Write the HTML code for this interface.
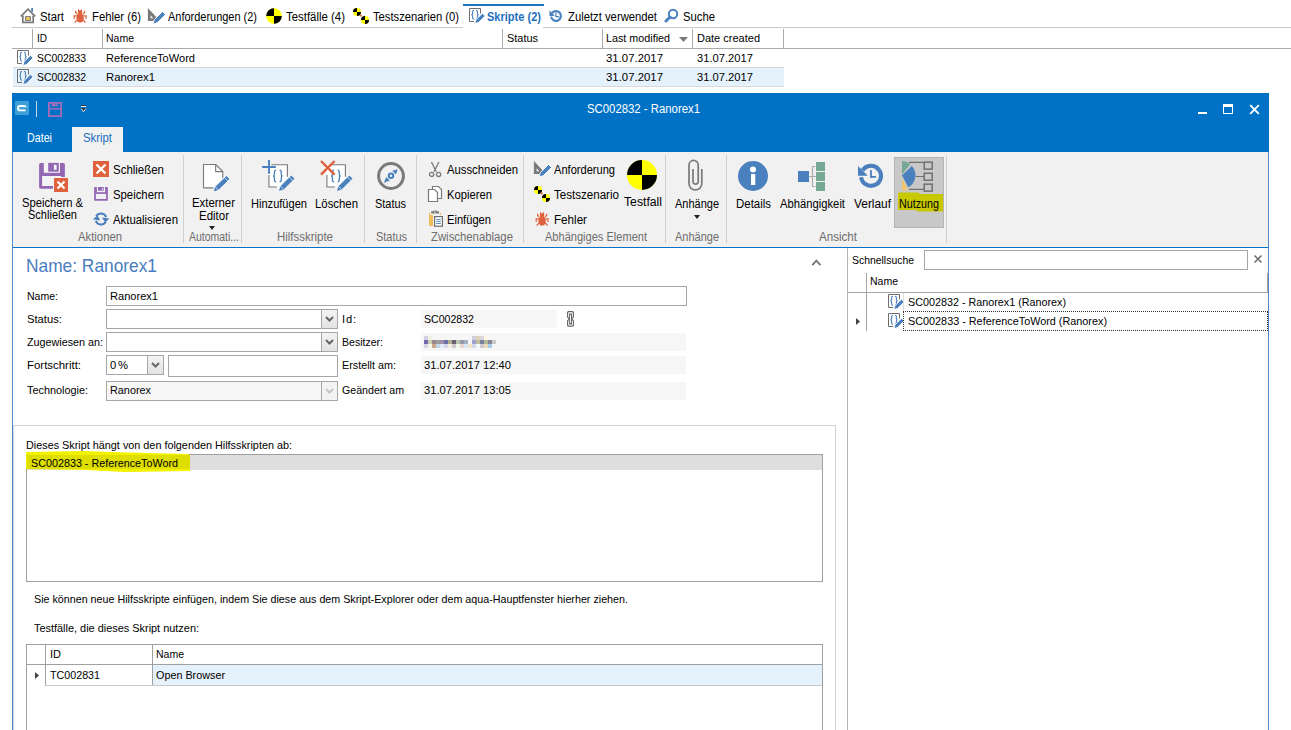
<!DOCTYPE html><html><head><meta charset="utf-8"><style>
html,body{margin:0;padding:0;}
body{width:1291px;height:730px;position:relative;overflow:hidden;background:#fff;font-family:"Liberation Sans", sans-serif;}
.t{position:absolute;white-space:nowrap;line-height:normal;transform-origin:0 0;}
#t0{transform:scaleX(0.9236)}
#t1{transform:scaleX(0.9191)}
#t2{transform:scaleX(0.8917)}
#t3{transform:scaleX(0.9282)}
#t4{transform:scaleX(0.9117)}
#t5{transform:scaleX(0.8979)}
#t6{transform:scaleX(0.9169)}
#t7{transform:scaleX(0.9176)}
#t8{transform:scaleX(0.9091)}
#t9{transform:scaleX(0.9542)}
#t10{transform:scaleX(0.9940)}
#t11{transform:scaleX(0.9780)}
#t12{transform:scaleX(1.0002)}
#t13{transform:scaleX(0.9423)}
#t14{transform:scaleX(1.0062)}
#t15{transform:scaleX(1.0352)}
#t16{transform:scaleX(1.0170)}
#t17{transform:scaleX(0.9423)}
#t18{transform:scaleX(1.0272)}
#t19{transform:scaleX(1.0352)}
#t20{transform:scaleX(1.0170)}
#t21{transform:scaleX(0.8705)}
#t22{transform:scaleX(0.9225)}
#t23{transform:scaleX(0.9234)}
#t24{transform:scaleX(0.9194)}
#t25{transform:scaleX(0.8506)}
#t26{transform:scaleX(0.9312)}
#t27{transform:scaleX(0.8889)}
#t28{transform:scaleX(0.9226)}
#t29{transform:scaleX(0.8988)}
#t30{transform:scaleX(0.8934)}
#t31{transform:scaleX(0.9423)}
#t32{transform:scaleX(0.9104)}
#t33{transform:scaleX(0.8960)}
#t34{transform:scaleX(0.9326)}
#t35{transform:scaleX(0.9210)}
#t36{transform:scaleX(0.9232)}
#t37{transform:scaleX(0.9250)}
#t38{transform:scaleX(0.9339)}
#t39{transform:scaleX(0.9001)}
#t40{transform:scaleX(0.9247)}
#t41{transform:scaleX(0.8889)}
#t42{transform:scaleX(0.9189)}
#t43{transform:scaleX(0.9140)}
#t44{transform:scaleX(0.9063)}
#t45{transform:scaleX(0.9012)}
#t46{transform:scaleX(0.9414)}
#t47{transform:scaleX(0.9467)}
#t48{transform:scaleX(0.9927)}
#t49{transform:scaleX(0.8934)}
#t50{transform:scaleX(0.9310)}
#t51{transform:scaleX(0.9141)}
#t52{transform:scaleX(0.9661)}
#t53{transform:scaleX(0.8731)}
#t54{transform:scaleX(0.9368)}
#t55{transform:scaleX(0.9407)}
#t56{transform:scaleX(1.0049)}
#t57{transform:scaleX(0.9620)}
#t58{transform:scaleX(1.0219)}
#t59{transform:scaleX(0.9709)}
#t60{transform:scaleX(0.9894)}
#t62{transform:scaleX(0.9693)}
#t64{transform:scaleX(0.9419)}
#t65{transform:scaleX(0.9651)}
#t66{transform:scaleX(0.9495)}
#t67{transform:scaleX(0.9456)}
#t68{transform:scaleX(0.9987)}
#t69{transform:scaleX(0.9987)}
#t70{transform:scaleX(0.9677)}
#t71{transform:scaleX(0.9622)}
#t72{transform:scaleX(0.9580)}
#t73{transform:scaleX(0.9754)}
#t74{transform:scaleX(0.9832)}
#t75{transform:scaleX(0.9382)}
#t76{transform:scaleX(0.9569)}
#t77{transform:scaleX(0.9648)}
#t78{transform:scaleX(0.9317)}
#t79{transform:scaleX(0.9382)}
#t80{transform:scaleX(0.9624)}
#t81{transform:scaleX(0.9678)}
#t61{letter-spacing:1.828px}
#t63{letter-spacing:0.773px}</style></head><body>
<div style="position:absolute;left:12px;top:27px;width:451px;height:1px;background:#c9c9c9;"></div>
<div style="position:absolute;left:543px;top:27px;width:748px;height:1px;background:#c9c9c9;"></div>
<div style="position:absolute;left:463px;top:4px;width:81px;height:2px;background:#1e73be;"></div>
<svg style="position:absolute;left:19px;top:7px" width="18" height="17" viewBox="0 0 18 17">
<path d="M1.8 9.3L9 2.2l7.2 7.1" fill="none" stroke="#7a7a7a" stroke-width="1.7"/>
<path d="M3.8 8.5v6.9h10.4V8.5" fill="none" stroke="#7a7a7a" stroke-width="1.7"/>
<rect x="6.6" y="9.6" width="4.8" height="3.8" fill="#f4c45e" stroke="#7a7a7a" stroke-width="1"/>
<rect x="12.2" y="1" width="1.8" height="3.8" fill="#4a80bd"/>
</svg>
<span id="t0" class="t" style="left:40px;top:9.87px;font-size:12.3px;color:#000;font-weight:400;">Start</span>
<svg style="position:absolute;left:70px;top:6px" width="20" height="20" viewBox="0 0 20 20"><g fill="#e0613d">
<path d="M8.1 2.6L9.2 4.2H10.9L12 2.6 12.2 7H7.9z"/>
<ellipse cx="10.1" cy="11.8" rx="3.7" ry="5"/>
</g><path d="M7.2 7.8L5.6 6.6V4.8M13 7.8l1.6-1.2V4.8M6.8 9.8H4.2V13M13.4 9.8H16V13M7 14l-2.4 2.6M13.2 14l2.4 2.6" fill="none" stroke="#e0613d" stroke-width="1.2"/></svg>
<span id="t1" class="t" style="left:92px;top:9.87px;font-size:12.3px;color:#000;font-weight:400;">Fehler (6)</span>
<svg style="position:absolute;left:146px;top:6px" width="20" height="20" viewBox="0 0 20 20">
<path d="M1.9 1.9L10.5 11.2 8.3 15H1.9z" fill="#7a7a7a"/><path d="M4.6 9.2V12.3H7.3z" fill="#fff"/>
<path d="M7.00 18.00 L11.16 16.81 L19.48 8.48 L16.52 5.52 L8.19 13.84z" fill="#4a80bd" stroke="#fff" stroke-width="0.9"/>
</svg>
<span id="t2" class="t" style="left:168px;top:9.87px;font-size:12.3px;color:#000;font-weight:400;">Anforderungen (2)</span>
<svg style="position:absolute;left:265px;top:7px" width="18" height="18" viewBox="0 0 18 18"><circle cx="9" cy="9" r="7.8" fill="#ffff00"/><path d="M9 9V1.2000000000000002A7.8 7.8 0 0 0 1.2000000000000002 9Z" fill="#000"/><path d="M9 9V16.8A7.8 7.8 0 0 0 16.8 9Z" fill="#000"/></svg>
<span id="t3" class="t" style="left:286px;top:9.87px;font-size:12.3px;color:#000;font-weight:400;">Testfälle (4)</span>
<svg style="position:absolute;left:352px;top:7px" width="18" height="18" viewBox="0 0 18 18"><circle cx="5" cy="5" r="4" fill="#ffff00"/><path d="M5 5V1A4 4 0 0 0 1 5Z" fill="#000"/><path d="M5 5V9A4 4 0 0 0 9 5Z" fill="#000"/><circle cx="13" cy="13" r="4" fill="#ffff00"/><path d="M13 13V9A4 4 0 0 0 9 13Z" fill="#000"/><path d="M13 13V17A4 4 0 0 0 17 13Z" fill="#000"/><path d="M7.5 8.5l2.5-1-1 2.5z" fill="#e05030"/></svg>
<span id="t4" class="t" style="left:373px;top:9.87px;font-size:12.3px;color:#000;font-weight:400;">Testszenarien (0)</span>
<svg style="position:absolute;left:469px;top:8px" width="16" height="16" viewBox="0 0 16 16">
<path d="M5 13.5H0.5V0.5H11.5V5.5" fill="none" stroke="#6e6e6e" stroke-width="1"/>
<path d="M5 2.2c-1 0-1.4.5-1.4 1.5v1.8c0 .8-.5 1.2-1.3 1.2.8 0 1.3.4 1.3 1.2v1.8c0 1 .4 1.5 1.4 1.5M7 2.2c1 0 1.4.5 1.4 1.5v1.8c0 .8.5 1.2 1.3 1.2-.8 0-1.3.4-1.3 1.2v1.8c0 1-.4 1.5-1.4 1.5" fill="none" stroke="#4a80bd" stroke-width="1.1"/>
<path d="M5.80 15.60 L9.56 14.53 L16.14 7.94 L13.46 5.26 L6.87 11.84z" fill="#4a80bd" stroke="#fff" stroke-width="0.9"/>
</svg>
<span id="t5" class="t" style="left:487px;top:9.87px;font-size:12.3px;color:#1e6fc0;font-weight:700;">Skripte (2)</span>
<svg style="position:absolute;left:548px;top:8px" width="16" height="16" viewBox="0 0 16 16">
<path d="M3.15 8.6A4.9 4.9 0 1 0 3.9 5.3" fill="none" stroke="#4a80bd" stroke-width="2.2"/>
<path d="M1.5 2.3V7.9H6.8z" fill="#4a80bd"/>
<path d="M7.9 4.6V8.6H11" fill="none" stroke="#4a80bd" stroke-width="1.2"/>
</svg>
<span id="t6" class="t" style="left:568px;top:9.87px;font-size:12.3px;color:#000;font-weight:400;">Zuletzt verwendet</span>
<svg style="position:absolute;left:664px;top:8px" width="15" height="15" viewBox="0 0 15 15">
<circle cx="9" cy="6" r="4.2" fill="none" stroke="#4a80bd" stroke-width="2"/>
<path d="M6 9L2 13" stroke="#4a80bd" stroke-width="3" stroke-linecap="round"/>
</svg>
<span id="t7" class="t" style="left:683px;top:9.87px;font-size:12.3px;color:#000;font-weight:400;">Suche</span>
<div style="position:absolute;left:12px;top:48px;width:1279px;height:1px;background:#a9a9a9;"></div>
<div style="position:absolute;left:32px;top:29px;width:1px;height:19px;background:#a9a9a9;"></div>
<div style="position:absolute;left:102px;top:29px;width:1px;height:19px;background:#a9a9a9;"></div>
<div style="position:absolute;left:502px;top:29px;width:1px;height:19px;background:#a9a9a9;"></div>
<div style="position:absolute;left:602px;top:29px;width:1px;height:19px;background:#a9a9a9;"></div>
<div style="position:absolute;left:692px;top:29px;width:1px;height:19px;background:#a9a9a9;"></div>
<div style="position:absolute;left:783px;top:29px;width:1px;height:19px;background:#a9a9a9;"></div>
<div style="position:absolute;left:13px;top:67px;width:771px;height:1px;background:#d9d9d9;"></div>
<div style="position:absolute;left:13px;top:68px;width:771px;height:18px;background:#e5f1fb;"></div>
<div style="position:absolute;left:13px;top:86px;width:771px;height:1px;background:#d9d9d9;"></div>
<span id="t8" class="t" style="left:37px;top:32.05px;font-size:11px;color:#000;font-weight:400;">ID</span>
<span id="t9" class="t" style="left:106px;top:32.05px;font-size:11px;color:#000;font-weight:400;">Name</span>
<span id="t10" class="t" style="left:507px;top:32.05px;font-size:11px;color:#000;font-weight:400;">Status</span>
<span id="t11" class="t" style="left:606px;top:32.05px;font-size:11px;color:#000;font-weight:400;">Last modified</span>
<span id="t12" class="t" style="left:697px;top:32.05px;font-size:11px;color:#000;font-weight:400;">Date created</span>
<svg style="position:absolute;left:679px;top:37px" width="9" height="5" viewBox="0 0 9 5"><path d="M0 0h9L4.5 5z" fill="#7a7a7a"/></svg>
<svg style="position:absolute;left:17px;top:50px" width="16" height="16" viewBox="0 0 16 16">
<path d="M5 13.5H0.5V0.5H11.5V5.5" fill="none" stroke="#6e6e6e" stroke-width="1"/>
<path d="M5 2.2c-1 0-1.4.5-1.4 1.5v1.8c0 .8-.5 1.2-1.3 1.2.8 0 1.3.4 1.3 1.2v1.8c0 1 .4 1.5 1.4 1.5M7 2.2c1 0 1.4.5 1.4 1.5v1.8c0 .8.5 1.2 1.3 1.2-.8 0-1.3.4-1.3 1.2v1.8c0 1-.4 1.5-1.4 1.5" fill="none" stroke="#4a80bd" stroke-width="1.1"/>
<path d="M5.80 15.60 L9.56 14.53 L16.14 7.94 L13.46 5.26 L6.87 11.84z" fill="#4a80bd" stroke="#fff" stroke-width="0.9"/>
</svg>
<span id="t13" class="t" style="left:37px;top:52.05px;font-size:11px;color:#000;font-weight:400;">SC002833</span>
<span id="t14" class="t" style="left:106px;top:52.05px;font-size:11px;color:#000;font-weight:400;">ReferenceToWord</span>
<span id="t15" class="t" style="left:606px;top:52.05px;font-size:11px;color:#000;font-weight:400;">31.07.2017</span>
<span id="t16" class="t" style="left:697px;top:52.05px;font-size:11px;color:#000;font-weight:400;">31.07.2017</span>
<svg style="position:absolute;left:17px;top:69px" width="16" height="16" viewBox="0 0 16 16">
<path d="M5 13.5H0.5V0.5H11.5V5.5" fill="none" stroke="#6e6e6e" stroke-width="1"/>
<path d="M5 2.2c-1 0-1.4.5-1.4 1.5v1.8c0 .8-.5 1.2-1.3 1.2.8 0 1.3.4 1.3 1.2v1.8c0 1 .4 1.5 1.4 1.5M7 2.2c1 0 1.4.5 1.4 1.5v1.8c0 .8.5 1.2 1.3 1.2-.8 0-1.3.4-1.3 1.2v1.8c0 1-.4 1.5-1.4 1.5" fill="none" stroke="#4a80bd" stroke-width="1.1"/>
<path d="M5.80 15.60 L9.56 14.53 L16.14 7.94 L13.46 5.26 L6.87 11.84z" fill="#4a80bd" stroke="#fff" stroke-width="0.9"/>
</svg>
<span id="t17" class="t" style="left:37px;top:71.05px;font-size:11px;color:#000;font-weight:400;">SC002832</span>
<span id="t18" class="t" style="left:106px;top:71.05px;font-size:11px;color:#000;font-weight:400;">Ranorex1</span>
<span id="t19" class="t" style="left:606px;top:71.05px;font-size:11px;color:#000;font-weight:400;">31.07.2017</span>
<span id="t20" class="t" style="left:697px;top:71.05px;font-size:11px;color:#000;font-weight:400;">31.07.2017</span>
<div style="position:absolute;left:12px;top:93px;width:1257px;height:59px;background:#0072c6;"></div>
<div style="position:absolute;left:12px;top:152px;width:1px;height:578px;background:#4e88c6;"></div>
<div style="position:absolute;left:1268px;top:152px;width:1px;height:578px;background:#4e88c6;"></div>
<div style="position:absolute;left:13px;top:152px;width:1255px;height:95px;background:#f1f1f1;"></div>
<div style="position:absolute;left:13px;top:247px;width:1255px;height:1px;background:#0872c8;"></div>
<div style="position:absolute;left:72px;top:127px;width:51px;height:25px;background:#f1f1f1;"></div>
<span id="t21" class="t" style="left:27px;top:130.87px;font-size:12.3px;color:#fff;font-weight:400;">Datei</span>
<span id="t22" class="t" style="left:83px;top:130.87px;font-size:12.3px;color:#1a6dbd;font-weight:400;">Skript</span>
<span id="t23" class="t" style="left:587px;top:101.87px;font-size:12.3px;color:#fff;font-weight:400;">SC002832 - Ranorex1</span>
<svg style="position:absolute;left:15px;top:101px" width="14" height="14" viewBox="0 0 14 14"><rect width="14" height="14" fill="#3fa0d8"/><path d="M10.5 6.2C10.5 5 9.8 5 8.5 5H5.2a2.2 2.2 0 0 0 0 4.4H10.5" fill="none" stroke="#fff" stroke-width="1.9"/></svg>
<div style="position:absolute;left:36px;top:101px;width:1px;height:16px;background:#c9d6e6;"></div>
<svg style="position:absolute;left:48px;top:102px" width="15" height="15" viewBox="0 0 15 15"><path d="M0.9 0.9h12.2v13.2H0.9z" fill="none" stroke="#a46cb8" stroke-width="1.8"/><rect x="3.8" y="0" width="6" height="4.4" fill="#a46cb8"/><rect x="7" y="1" width="1.6" height="2.4" fill="#3a7fc8"/><path d="M0.9 6.8h12.2" stroke="#a46cb8" stroke-width="1.4"/></svg>
<div style="position:absolute;left:81px;top:105px;width:5px;height:1px;background:#3a3a3a;"></div>
<div style="position:absolute;left:81px;top:106px;width:5px;height:1px;background:#f4f4f4;"></div>
<svg style="position:absolute;left:80px;top:107px" width="8" height="6" viewBox="0 0 8 6"><path d="M1 1H6L3.5 4.6z" fill="#3a3a3a"/><path d="M1.2 1.6L3.5 4.8 5.8 1.6" fill="none" stroke="#fff" stroke-width="0.8"/></svg>
<div style="position:absolute;left:1198px;top:112px;width:9px;height:2px;background:#fff;"></div>
<div style="position:absolute;left:1223px;top:104px;width:10px;height:10px;box-sizing:border-box;border:1px solid #fff;background:transparent;"></div>
<div style="position:absolute;left:1223px;top:104px;width:10px;height:3px;background:#fff;"></div>
<svg style="position:absolute;left:1249px;top:104px" width="11" height="11" viewBox="0 0 11 11"><path d="M1.2 1.2l8.6 8.6M9.8 1.2l-8.6 8.6" stroke="#fff" stroke-width="1.9"/></svg>
<div style="position:absolute;left:183px;top:155px;width:1px;height:88px;background:#d0d0d0;"></div>
<div style="position:absolute;left:241px;top:155px;width:1px;height:88px;background:#d0d0d0;"></div>
<div style="position:absolute;left:364px;top:155px;width:1px;height:88px;background:#d0d0d0;"></div>
<div style="position:absolute;left:416px;top:155px;width:1px;height:88px;background:#d0d0d0;"></div>
<div style="position:absolute;left:523px;top:155px;width:1px;height:88px;background:#d0d0d0;"></div>
<div style="position:absolute;left:665px;top:155px;width:1px;height:88px;background:#d0d0d0;"></div>
<div style="position:absolute;left:726px;top:155px;width:1px;height:88px;background:#d0d0d0;"></div>
<div style="position:absolute;left:946px;top:155px;width:1px;height:88px;background:#d0d0d0;"></div>
<span id="t24" class="t" style="left:78px;top:229.87px;font-size:12.3px;color:#6d6d6d;font-weight:400;">Aktionen</span>
<span id="t25" class="t" style="left:189px;top:229.87px;font-size:12.3px;color:#6d6d6d;font-weight:400;">Automati...</span>
<span id="t26" class="t" style="left:277px;top:229.87px;font-size:12.3px;color:#6d6d6d;font-weight:400;">Hilfsskripte</span>
<span id="t27" class="t" style="left:376px;top:229.87px;font-size:12.3px;color:#6d6d6d;font-weight:400;">Status</span>
<span id="t28" class="t" style="left:431px;top:229.87px;font-size:12.3px;color:#6d6d6d;font-weight:400;">Zwischenablage</span>
<span id="t29" class="t" style="left:545px;top:229.87px;font-size:12.3px;color:#6d6d6d;font-weight:400;">Abhängiges Element</span>
<span id="t30" class="t" style="left:675px;top:229.87px;font-size:12.3px;color:#6d6d6d;font-weight:400;">Anhänge</span>
<span id="t31" class="t" style="left:819px;top:229.87px;font-size:12.3px;color:#6d6d6d;font-weight:400;">Ansicht</span>
<svg style="position:absolute;left:38px;top:162px" width="32" height="32" viewBox="0 0 32 32">
<rect x="1.1" y="0.9" width="25.8" height="25.8" rx="1.6" fill="#9467b3"/>
<rect x="5.8" y="0.9" width="16.2" height="9.9" fill="#f4f4f4"/>
<rect x="10.2" y="0.9" width="10.6" height="8.8" fill="#9467b3"/>
<rect x="15.9" y="2.8" width="2.7" height="5" fill="#f4f4f4"/>
<rect x="4.1" y="14" width="19" height="10" fill="#f4f4f4"/>
<rect x="15" y="15" width="16" height="15" fill="#f1f1f1"/>
<rect x="16" y="16" width="14" height="14" fill="#e0613d"/>
<path d="M19.5 19.5l7 7M26.5 19.5l-7 7" stroke="#fff" stroke-width="2.2"/>
</svg>
<span id="t32" class="t" style="left:22px;top:195.87px;font-size:12.3px;color:#000;font-weight:400;">Speichern &amp;</span>
<span id="t33" class="t" style="left:28px;top:207.87px;font-size:12.3px;color:#000;font-weight:400;">Schließen</span>
<svg style="position:absolute;left:93px;top:161px" width="17" height="17" viewBox="0 0 17 17"><rect x="0" y="0" width="16" height="16" fill="#e0613d"/><path d="M3.5 3.5l9 9M12.5 3.5l-9 9" stroke="#fff" stroke-width="2.4"/></svg>
<span id="t34" class="t" style="left:113px;top:162.87px;font-size:12.3px;color:#000;font-weight:400;">Schließen</span>
<svg style="position:absolute;left:91px;top:184px" width="20" height="20" viewBox="0 0 20 20"><rect x="3.15" y="3" width="13.7" height="13.7" rx="0.6" fill="#9467b3"/><rect x="5.9" y="3" width="8.2" height="5.2" fill="#f1f1f1"/><rect x="7" y="3" width="5.8" height="3.7" fill="#9467b3"/><rect x="11" y="4.1" width="1" height="1.8" fill="#f1f1f1"/><rect x="4.9" y="9.9" width="10.2" height="5.1" fill="#f1f1f1"/></svg>
<span id="t35" class="t" style="left:113px;top:187.87px;font-size:12.3px;color:#000;font-weight:400;">Speichern</span>
<svg style="position:absolute;left:92px;top:211px" width="18" height="16" viewBox="0 0 18 16">
<path d="M4.24 5.25A5.5 5.5 0 0 1 14.17 6.12" fill="none" stroke="#4a80bd" stroke-width="2"/>
<path d="M13.76 10.75A5.5 5.5 0 0 1 3.83 9.88" fill="none" stroke="#4a80bd" stroke-width="2"/>
<path d="M0.8 8.2L5.6 4.6 8.2 9.4z" fill="#4a80bd"/><path d="M9.8 6.6L17.2 7.6 13.4 11.6z" fill="#4a80bd"/>
</svg>
<span id="t36" class="t" style="left:113px;top:212.87px;font-size:12.3px;color:#000;font-weight:400;">Aktualisieren</span>
<svg style="position:absolute;left:198px;top:158px" width="34" height="38" viewBox="0 0 34 38">
<path d="M5 6H17.7L25 13.3V30H5z" fill="#fff"/>
<path d="M5.5 29.9V6.5H17.7L24.8 13.6V20M5.5 29.9H15.5" fill="none" stroke="#777" stroke-width="1.1"/>
<path d="M17.7 6.5V13.6H24.8" fill="none" stroke="#777" stroke-width="1.1"/>
<path d="M15.00 34.00 L20.17 32.62 L32.01 21.17 L28.39 17.43 L16.56 28.88z" fill="#4a80bd" stroke="#fff" stroke-width="0.9"/><path d="M20.60 32.20L16.99 28.46" stroke="#fff" stroke-width="0.7"/><path d="M29.95 23.16L26.34 19.42" stroke="#fff" stroke-width="0.7"/>
</svg>
<span id="t37" class="t" style="left:192px;top:195.87px;font-size:12.3px;color:#000;font-weight:400;">Externer</span>
<span id="t38" class="t" style="left:199px;top:208.87px;font-size:12.3px;color:#000;font-weight:400;">Editor</span>
<svg style="position:absolute;left:209px;top:226px" width="7" height="5" viewBox="0 0 7 5"><path d="M0 0h6L3 4z" fill="#222"/></svg>
<svg style="position:absolute;left:258px;top:156px" width="40" height="40" viewBox="0 0 40 40">
<rect x="10.4" y="8.2" width="19.5" height="23.3" fill="#fff"/>
<path d="M13.2 8.7H29.4V20.8M10.9 18.9V31H18.9" fill="none" stroke="#777" stroke-width="1.1"/>
<path d="M18.1 14.2c-1.6 0-1.7.9-1.7 2.3v1.9c0 1-.5 1.6-1.3 1.6.8 0 1.3.6 1.3 1.6v1.9c0 1.4.1 2.3 1.7 2.3M21.6 14.2c1.6 0 1.7.9 1.7 2.3v1.9c0 1 .5 1.6 1.3 1.6-.8 0-1.3.6-1.3 1.6v1.9c0 1.4-.1 2.3-1.7 2.3" fill="none" stroke="#4a80bd" stroke-width="1.3"/>
<path d="M20.30 35.60 L25.45 34.15 L37.03 22.64 L33.37 18.96 L21.79 30.46z" fill="#4a80bd" stroke="#fff" stroke-width="0.9"/><path d="M25.88 33.72L22.21 30.03" stroke="#fff" stroke-width="0.7"/><path d="M35.00 24.66L31.34 20.97" stroke="#fff" stroke-width="0.7"/>
<path d="M4.1 11H17.8M11 4.1V17.8" stroke="#4a80bd" stroke-width="1.9"/>
</svg>
<span id="t39" class="t" style="left:251px;top:196.87px;font-size:12.3px;color:#000;font-weight:400;">Hinzufügen</span>
<svg style="position:absolute;left:316px;top:156px" width="40" height="40" viewBox="0 0 40 40">
<rect x="10.4" y="8.2" width="19.5" height="23.3" fill="#fff"/>
<path d="M13.2 8.7H29.4V20.8M10.9 18.9V31H18.9" fill="none" stroke="#777" stroke-width="1.1"/>
<path d="M18.1 14.2c-1.6 0-1.7.9-1.7 2.3v1.9c0 1-.5 1.6-1.3 1.6.8 0 1.3.6 1.3 1.6v1.9c0 1.4.1 2.3 1.7 2.3M21.6 14.2c1.6 0 1.7.9 1.7 2.3v1.9c0 1 .5 1.6 1.3 1.6-.8 0-1.3.6-1.3 1.6v1.9c0 1.4-.1 2.3-1.7 2.3" fill="none" stroke="#4a80bd" stroke-width="1.3"/>
<path d="M20.30 35.60 L25.45 34.15 L37.03 22.64 L33.37 18.96 L21.79 30.46z" fill="#4a80bd" stroke="#fff" stroke-width="0.9"/><path d="M25.88 33.72L22.21 30.03" stroke="#fff" stroke-width="0.7"/><path d="M35.00 24.66L31.34 20.97" stroke="#fff" stroke-width="0.7"/>
<path d="M5 5l13.6 13.6M18.6 5L5 18.6" stroke="#e0613d" stroke-width="2.4"/>
</svg>
<span id="t40" class="t" style="left:315px;top:196.87px;font-size:12.3px;color:#000;font-weight:400;">Löschen</span>
<svg style="position:absolute;left:376px;top:161px" width="30" height="30" viewBox="0 0 30 30">
<circle cx="15" cy="15" r="12.4" fill="none" stroke="#7a7a7a" stroke-width="3"/>
<path d="M21.75 8.2L19.9 13.6 16.3 9.8z" fill="#4a80bd"/><path d="M8 21.8L10.1 16 13.9 19.6z" fill="#4a80bd"/>
<circle cx="15" cy="14.7" r="2.2" fill="none" stroke="#4a80bd" stroke-width="2"/>
</svg>
<span id="t41" class="t" style="left:375px;top:196.87px;font-size:12.3px;color:#000;font-weight:400;">Status</span>
<svg style="position:absolute;left:426px;top:158px" width="18" height="20" viewBox="0 0 18 20">
<path d="M5.4 4L10.3 13.8M12.9 4L8 13.8" stroke="#7a7a7a" stroke-width="1.3"/>
<circle cx="5.6" cy="16.4" r="2.1" fill="none" stroke="#7a7a7a" stroke-width="1.3"/>
<circle cx="12.6" cy="16.4" r="2.1" fill="none" stroke="#7a7a7a" stroke-width="1.3"/>
</svg>
<span id="t42" class="t" style="left:447px;top:162.87px;font-size:12.3px;color:#000;font-weight:400;">Ausschneiden</span>
<svg style="position:absolute;left:427px;top:185px" width="17" height="18" viewBox="0 0 17 18">
<path d="M5.5 1.5h6l3 3V13.5H5.5z" fill="#fff" stroke="#7a7a7a" stroke-width="1.2"/>
<path d="M1.5 4.5h6l3 3V16.5H1.5z" fill="#fff" stroke="#7a7a7a" stroke-width="1.2"/>
</svg>
<span id="t43" class="t" style="left:447px;top:187.87px;font-size:12.3px;color:#000;font-weight:400;">Kopieren</span>
<svg style="position:absolute;left:426px;top:208px" width="20" height="22" viewBox="0 0 20 22">
<path d="M3 4.8H4.2V7H7V18H3z" fill="#efbc5a"/>
<rect x="13.9" y="5" width="1.2" height="1.9" fill="#efbc5a"/>
<path d="M5.2 3.2H7.6V2.6H10.6V3.2H13V5.6H5.2z" fill="#777"/><rect x="8.2" y="3.6" width="1.8" height="0.9" fill="#eee"/>
<rect x="8.6" y="8.6" width="7.8" height="9.6" fill="#fff" stroke="#6e6e6e" stroke-width="1.2"/>
<path d="M10.2 11.4h4.6M10.2 13.4h4.6M10.2 15.5h4.6" stroke="#4a80bd" stroke-width="0.9"/>
</svg>
<span id="t44" class="t" style="left:447px;top:212.87px;font-size:12.3px;color:#000;font-weight:400;">Einfügen</span>
<svg style="position:absolute;left:532px;top:159px" width="20" height="20" viewBox="0 0 20 20">
<path d="M1.9 1.9L10.5 11.2 8.3 15H1.9z" fill="#7a7a7a"/><path d="M4.6 9.2V12.3H7.3z" fill="#fff"/>
<path d="M7.00 18.00 L11.16 16.81 L19.48 8.48 L16.52 5.52 L8.19 13.84z" fill="#4a80bd" stroke="#fff" stroke-width="0.9"/>
</svg>
<span id="t45" class="t" style="left:554px;top:162.87px;font-size:12.3px;color:#000;font-weight:400;">Anforderung</span>
<svg style="position:absolute;left:533px;top:185px" width="18" height="18" viewBox="0 0 18 18"><circle cx="5" cy="5" r="4" fill="#ffff00"/><path d="M5 5V1A4 4 0 0 0 1 5Z" fill="#000"/><path d="M5 5V9A4 4 0 0 0 9 5Z" fill="#000"/><circle cx="13" cy="13" r="4" fill="#ffff00"/><path d="M13 13V9A4 4 0 0 0 9 13Z" fill="#000"/><path d="M13 13V17A4 4 0 0 0 17 13Z" fill="#000"/><path d="M7.5 8.5l2.5-1-1 2.5z" fill="#e05030"/></svg>
<span id="t46" class="t" style="left:554px;top:187.87px;font-size:12.3px;color:#000;font-weight:400;">Testszenario</span>
<svg style="position:absolute;left:532px;top:209px" width="20" height="20" viewBox="0 0 20 20"><g fill="#e0613d">
<path d="M8.1 2.6L9.2 4.2H10.9L12 2.6 12.2 7H7.9z"/>
<ellipse cx="10.1" cy="11.8" rx="3.7" ry="5"/>
</g><path d="M7.2 7.8L5.6 6.6V4.8M13 7.8l1.6-1.2V4.8M6.8 9.8H4.2V13M13.4 9.8H16V13M7 14l-2.4 2.6M13.2 14l2.4 2.6" fill="none" stroke="#e0613d" stroke-width="1.2"/></svg>
<span id="t47" class="t" style="left:554px;top:212.87px;font-size:12.3px;color:#000;font-weight:400;">Fehler</span>
<svg style="position:absolute;left:626px;top:159px" width="32" height="32" viewBox="0 0 32 32"><circle cx="16" cy="16" r="15" fill="#ffff00"/><path d="M16 16V1A15 15 0 0 0 1 16Z" fill="#000"/><path d="M16 16V31A15 15 0 0 0 31 16Z" fill="#000"/></svg>
<span id="t48" class="t" style="left:624px;top:194.87px;font-size:12.3px;color:#000;font-weight:400;">Testfall</span>
<svg style="position:absolute;left:683px;top:158px" width="25" height="36" viewBox="0 0 25 36"><path d="M10 11.1V23.5A2.6 2.6 0 0 0 15.2 23.5V7A4.6 4.6 0 0 0 6 7V25.5A6.4 6.4 0 0 0 18.8 25.5V11.1" fill="none" stroke="#7c7c7c" stroke-width="1.75"/></svg>
<span id="t49" class="t" style="left:675px;top:196.87px;font-size:12.3px;color:#000;font-weight:400;">Anhänge</span>
<svg style="position:absolute;left:694px;top:215px" width="7" height="5" viewBox="0 0 7 5"><path d="M0 0h6L3 4z" fill="#222"/></svg>
<svg style="position:absolute;left:737px;top:160px" width="32" height="32" viewBox="0 0 32 32">
<circle cx="16" cy="16" r="15" fill="#4a80bd"/>
<circle cx="16" cy="9.5" r="3" fill="#fff"/>
<rect x="14" y="14" width="4.3" height="11" fill="#fff"/>
</svg>
<span id="t50" class="t" style="left:736px;top:196.87px;font-size:12.3px;color:#000;font-weight:400;">Details</span>
<svg style="position:absolute;left:797px;top:161px" width="30" height="32" viewBox="0 0 30 32">
<rect x="1" y="10" width="11" height="11" fill="#4a80bd"/>
<path d="M12 15.5h7M15.5 5.5v20M15.5 5.5h3M15.5 25.5h3" fill="none" stroke="#aaa" stroke-width="1.2"/>
<rect x="19" y="1" width="9" height="9" fill="#76a895"/>
<rect x="19" y="11" width="9" height="9" fill="#76a895"/>
<rect x="19" y="21" width="9" height="9" fill="#76a895"/>
</svg>
<span id="t51" class="t" style="left:780px;top:196.87px;font-size:12.3px;color:#000;font-weight:400;">Abhängigkeit</span>
<svg style="position:absolute;left:855px;top:160px" width="32" height="32" viewBox="0 0 32 32">
<path d="M6.1 17.2A10 10 0 1 0 7.6 10.4" fill="none" stroke="#4a80bd" stroke-width="4.1"/>
<path d="M3 6L3 15.8 12.8 15.8z" fill="#4a80bd"/>
<rect x="15.1" y="10.1" width="1.8" height="7.7" fill="#4a80bd"/><rect x="15.1" y="16" width="5.8" height="1.8" fill="#4a80bd"/>
</svg>
<span id="t52" class="t" style="left:854px;top:196.87px;font-size:12.3px;color:#000;font-weight:400;">Verlauf</span>
<div style="position:absolute;left:894px;top:157px;width:50px;height:71px;box-sizing:border-box;border:1px solid #b3b3b3;background:#c8c8c8;"></div>
<svg style="position:absolute;left:900px;top:160px" width="36" height="33" viewBox="0 0 36 33">
<path d="M2 14.2L2 1A13.2 13.2 0 0 1 10.4 4.1Z" fill="#76a895"/>
<path d="M2 15.3L11.9 6.1A13.5 13.5 0 0 1 8.3 27.2Z" fill="#4a80bd"/>
<path d="M2 18.2L7.9 29.4A13 13 0 0 1 2 30.8Z" fill="#f0c670"/>
<path d="M9 2.4H24M16 16.5H24M9 29.3H24" stroke="#707070" stroke-width="1.2"/>
<rect x="24.2" y="2.15" width="8" height="7" fill="none" stroke="#707070" stroke-width="1.5"/>
<rect x="24.2" y="13.25" width="8" height="7" fill="none" stroke="#707070" stroke-width="1.5"/>
<rect x="24.2" y="24.15" width="8" height="7" fill="none" stroke="#707070" stroke-width="1.5"/>
</svg>
<svg style="position:absolute;left:896px;top:191px" width="48" height="22" viewBox="0 0 48 22"><path d="M2 1.5H22L24 3H47V20.5H22L20 19H2z" fill="#c8c800"/></svg>
<span id="t53" class="t" style="left:899px;top:196.87px;font-size:12.3px;color:#000;font-weight:400;">Nutzung</span>
<div style="position:absolute;left:847px;top:248px;width:1px;height:482px;background:#b5b5b5;"></div>
<span id="t54" class="t" style="left:26px;top:255.26px;font-size:18.5px;color:#4a7dc0;font-weight:400;">Name: Ranorex1</span>
<svg style="position:absolute;left:811px;top:258px" width="11" height="9" viewBox="0 0 11 9"><path d="M1.3 7.2L5.4 2.6 9.5 7.2" fill="none" stroke="#777" stroke-width="1.8"/></svg>
<span id="t55" class="t" style="left:27px;top:289.86px;font-size:11.2px;color:#000;font-weight:400;">Name:</span>
<span id="t56" class="t" style="left:27px;top:312.86px;font-size:11.2px;color:#000;font-weight:400;">Status:</span>
<span id="t57" class="t" style="left:27px;top:335.86px;font-size:11.2px;color:#000;font-weight:400;">Zugewiesen an:</span>
<span id="t58" class="t" style="left:27px;top:358.86px;font-size:11.2px;color:#000;font-weight:400;">Fortschritt:</span>
<span id="t59" class="t" style="left:27px;top:383.86px;font-size:11.2px;color:#000;font-weight:400;">Technologie:</span>
<div style="position:absolute;left:106px;top:286px;width:581px;height:20px;box-sizing:border-box;border:1px solid #a6a6a6;background:#fff;"></div>
<span id="t60" class="t" style="left:110px;top:289.86px;font-size:11.2px;color:#000;font-weight:400;">Ranorex1</span>
<div style="position:absolute;left:106px;top:309px;width:232px;height:20px;box-sizing:border-box;border:1px solid #a6a6a6;background:#fff;"></div>
<div style="position:absolute;left:321px;top:309px;width:17px;height:20px;box-sizing:border-box;border:1px solid #a6a6a6;background:linear-gradient(#f3f3f3,#e3e3e3);"></div>
<svg style="position:absolute;left:325px;top:316px" width="9" height="6" viewBox="0 0 9 6"><path d="M1 1l3.5 3.5L8 1" fill="none" stroke="#666" stroke-width="2"/></svg>
<div style="position:absolute;left:106px;top:332px;width:232px;height:20px;box-sizing:border-box;border:1px solid #a6a6a6;background:#fff;"></div>
<div style="position:absolute;left:321px;top:332px;width:17px;height:20px;box-sizing:border-box;border:1px solid #a6a6a6;background:linear-gradient(#f3f3f3,#e3e3e3);"></div>
<svg style="position:absolute;left:325px;top:339px" width="9" height="6" viewBox="0 0 9 6"><path d="M1 1l3.5 3.5L8 1" fill="none" stroke="#666" stroke-width="2"/></svg>
<div style="position:absolute;left:106px;top:355px;width:58px;height:20px;box-sizing:border-box;border:1px solid #a6a6a6;background:#fff;"></div>
<div style="position:absolute;left:147px;top:355px;width:17px;height:20px;box-sizing:border-box;border:1px solid #a6a6a6;background:linear-gradient(#f3f3f3,#e3e3e3);"></div>
<svg style="position:absolute;left:151px;top:362px" width="9" height="6" viewBox="0 0 9 6"><path d="M1 1l3.5 3.5L8 1" fill="none" stroke="#666" stroke-width="2"/></svg>
<span id="t61" class="t" style="left:110px;top:358.86px;font-size:11.2px;color:#000;font-weight:400;">0%</span>
<div style="position:absolute;left:168px;top:355px;width:170px;height:22px;box-sizing:border-box;border:1px solid #a6a6a6;background:#fff;"></div>
<div style="position:absolute;left:106px;top:381px;width:232px;height:20px;box-sizing:border-box;border:1px solid #a6a6a6;background:#f7f7f7;"></div>
<div style="position:absolute;left:321px;top:381px;width:17px;height:20px;box-sizing:border-box;border:1px solid #a6a6a6;background:#f3f3f3;"></div>
<svg style="position:absolute;left:325px;top:388px" width="9" height="6" viewBox="0 0 9 6"><path d="M1 1l3.5 3.5L8 1" fill="none" stroke="#c4c4c4" stroke-width="2"/></svg>
<span id="t62" class="t" style="left:110px;top:383.86px;font-size:11.2px;color:#000;font-weight:400;">Ranorex</span>
<span id="t63" class="t" style="left:342px;top:312.86px;font-size:11.2px;color:#000;font-weight:400;">Id:</span>
<span id="t64" class="t" style="left:342px;top:335.86px;font-size:11.2px;color:#000;font-weight:400;">Besitzer:</span>
<span id="t65" class="t" style="left:342px;top:358.86px;font-size:11.2px;color:#000;font-weight:400;">Erstellt am:</span>
<span id="t66" class="t" style="left:342px;top:383.86px;font-size:11.2px;color:#000;font-weight:400;">Geändert am</span>
<div style="position:absolute;left:421px;top:310px;width:136px;height:18px;background:#f6f6f6;"></div>
<div style="position:absolute;left:421px;top:333px;width:265px;height:18px;background:#f6f6f6;"></div>
<div style="position:absolute;left:421px;top:356px;width:265px;height:18px;background:#f6f6f6;"></div>
<div style="position:absolute;left:421px;top:382px;width:265px;height:18px;background:#f6f6f6;"></div>
<span id="t67" class="t" style="left:424px;top:312.86px;font-size:11.2px;color:#000;font-weight:400;">SC002832</span>
<span id="t68" class="t" style="left:424px;top:358.86px;font-size:11.2px;color:#000;font-weight:400;">31.07.2017 12:40</span>
<span id="t69" class="t" style="left:424px;top:383.86px;font-size:11.2px;color:#000;font-weight:400;">31.07.2017 13:05</span>
<svg style="position:absolute;left:424px;top:336px" width="72" height="12" viewBox="0 0 72 12"><rect x="0" y="0" width="4" height="4" fill="#d0d0e0"/><rect x="4" y="0" width="4" height="4" fill="#f0f0e0"/><rect x="48" y="0" width="4" height="4" fill="#d0d0dc"/><rect x="52" y="0" width="4" height="4" fill="#e0d0c0"/><rect x="56" y="0" width="4" height="4" fill="#d8d8d8"/><rect x="60" y="0" width="4" height="4" fill="#fff4e4"/><rect x="0" y="4" width="4" height="4" fill="#7466b0"/><rect x="4" y="4" width="4" height="4" fill="#ccd0b0"/><rect x="8" y="4" width="4" height="4" fill="#9a8a90"/><rect x="12" y="4" width="4" height="4" fill="#9aa0a0"/><rect x="16" y="4" width="4" height="4" fill="#a090a8"/><rect x="20" y="4" width="4" height="4" fill="#6a70a8"/><rect x="24" y="4" width="4" height="4" fill="#b0b090"/><rect x="28" y="4" width="4" height="4" fill="#6a6078"/><rect x="32" y="4" width="4" height="4" fill="#b8c4b0"/><rect x="36" y="4" width="4" height="4" fill="#9498a8"/><rect x="40" y="4" width="4" height="4" fill="#a8b0c4"/><rect x="48" y="4" width="4" height="4" fill="#a0a0d0"/><rect x="52" y="4" width="4" height="4" fill="#c0c0a0"/><rect x="56" y="4" width="4" height="4" fill="#7a80a0"/><rect x="60" y="4" width="4" height="4" fill="#b0b898"/><rect x="64" y="4" width="4" height="4" fill="#8a8498"/><rect x="68" y="4" width="4" height="4" fill="#c8c8c8"/><rect x="0" y="8" width="4" height="4" fill="#d8d4e8"/><rect x="4" y="8" width="4" height="4" fill="#f0f8e8"/><rect x="8" y="8" width="4" height="4" fill="#d0a890"/><rect x="12" y="8" width="4" height="4" fill="#c0d8e8"/><rect x="16" y="8" width="4" height="4" fill="#e0ecf8"/><rect x="20" y="8" width="4" height="4" fill="#d8d8ec"/><rect x="24" y="8" width="4" height="4" fill="#f0f0e0"/><rect x="28" y="8" width="4" height="4" fill="#d0c8cc"/><rect x="32" y="8" width="4" height="4" fill="#f0f8ec"/><rect x="36" y="8" width="4" height="4" fill="#e8d4cc"/><rect x="40" y="8" width="4" height="4" fill="#d8e8f8"/><rect x="44" y="8" width="4" height="4" fill="#f4e4c8"/><rect x="48" y="8" width="4" height="4" fill="#d8d8ec"/><rect x="52" y="8" width="4" height="4" fill="#f0fcfc"/><rect x="56" y="8" width="4" height="4" fill="#d4ccd0"/><rect x="60" y="8" width="4" height="4" fill="#ecdcb8"/><rect x="64" y="8" width="4" height="4" fill="#a8ccf0"/></svg>
<svg style="position:absolute;left:558px;top:306px" width="26" height="26" viewBox="0 0 26 26"><path d="M10.3 5.6H14.7L15.4 6.3V11.1L14.1 12.4V13.4L15.4 14.7V19.5L14.7 20.2H10.3L9.6 19.5V14.7L10.9 13.4V12.4L9.6 11.1V6.3z" fill="none" stroke="#6a6a6a" stroke-width="1.2"/><rect x="11.6" y="8" width="1.9" height="10" fill="none" stroke="#6a6a6a" stroke-width="1"/></svg>
<div style="position:absolute;left:13px;top:425px;width:823px;height:1px;background:#d0d0d0;"></div>
<div style="position:absolute;left:13px;top:425px;width:1px;height:305px;background:#d6d6d6;"></div>
<div style="position:absolute;left:835px;top:425px;width:1px;height:305px;background:#d0d0d0;"></div>
<span id="t70" class="t" style="left:26px;top:438.86px;font-size:11.2px;color:#000;font-weight:400;">Dieses Skript hängt von den folgenden Hilfsskripten ab:</span>
<div style="position:absolute;left:26px;top:454px;width:797px;height:128px;box-sizing:border-box;border:1px solid #a0a0a0;background:#fff;"></div>
<div style="position:absolute;left:27px;top:455px;width:795px;height:15px;background:#dedede;"></div>
<svg style="position:absolute;left:25px;top:450px" width="166" height="23" viewBox="0 0 166 23"><path d="M1 2 L60 1 L85 2 L164 4 L165 21 L100 22 L60 20 L1 19 z" fill="#f2f200"/><rect x="2" y="5" width="163" height="14" fill="#dede00"/></svg>
<span id="t71" class="t" style="left:31px;top:456.86px;font-size:11.2px;color:#000;font-weight:400;">SC002833 - ReferenceToWord</span>
<span id="t72" class="t" style="left:34px;top:592.86px;font-size:11.2px;color:#000;font-weight:400;">Sie können neue Hilfsskripte einfügen, indem Sie diese aus dem Skript-Explorer oder dem aqua-Hauptfenster hierher ziehen.</span>
<span id="t73" class="t" style="left:34px;top:621.86px;font-size:11.2px;color:#000;font-weight:400;">Testfälle, die dieses Skript nutzen:</span>
<div style="position:absolute;left:26px;top:644px;width:797px;height:97px;box-sizing:border-box;border:1px solid #a0a0a0;background:#fff;"></div>
<div style="position:absolute;left:45px;top:645px;width:1px;height:41px;background:#a0a0a0;"></div>
<div style="position:absolute;left:152px;top:645px;width:1px;height:41px;background:#a0a0a0;"></div>
<div style="position:absolute;left:27px;top:664px;width:795px;height:1px;background:#a0a0a0;"></div>
<div style="position:absolute;left:153px;top:665px;width:669px;height:20px;background:#e5f1fb;"></div>
<div style="position:absolute;left:45px;top:685px;width:777px;height:1px;background:#c8c8c8;"></div>
<span id="t74" class="t" style="left:50px;top:647.86px;font-size:11.2px;color:#000;font-weight:400;">ID</span>
<span id="t75" class="t" style="left:156px;top:647.86px;font-size:11.2px;color:#000;font-weight:400;">Name</span>
<span id="t76" class="t" style="left:50px;top:668.86px;font-size:11.2px;color:#000;font-weight:400;">TC002831</span>
<span id="t77" class="t" style="left:156px;top:668.86px;font-size:11.2px;color:#000;font-weight:400;">Open Browser</span>
<svg style="position:absolute;left:34px;top:671px" width="6" height="9" viewBox="0 0 6 9"><path d="M1 1v7l4-3.5z" fill="#444"/></svg>
<span id="t78" class="t" style="left:852px;top:253.86px;font-size:11.2px;color:#000;font-weight:400;">Schnellsuche</span>
<div style="position:absolute;left:924px;top:250px;width:324px;height:20px;box-sizing:border-box;border:1px solid #a6a6a6;background:#fff;"></div>
<svg style="position:absolute;left:1253px;top:254px" width="10" height="10" viewBox="0 0 10 10"><path d="M1.5 1.5l7 7M8.5 1.5l-7 7" stroke="#707070" stroke-width="1.6"/></svg>
<div style="position:absolute;left:866px;top:273px;width:1px;height:58px;background:#a6a6a6;"></div>
<div style="position:absolute;left:1267px;top:273px;width:1px;height:20px;background:#a6a6a6;"></div>
<div style="position:absolute;left:848px;top:292px;width:420px;height:1px;background:#a6a6a6;"></div>
<span id="t79" class="t" style="left:870px;top:274.86px;font-size:11.2px;color:#000;font-weight:400;">Name</span>
<div style="position:absolute;left:903px;top:293px;width:1px;height:19px;background:#dcdcdc;"></div>
<svg style="position:absolute;left:888px;top:294px" width="16" height="16" viewBox="0 0 16 16">
<path d="M5 13.5H0.5V0.5H11.5V5.5" fill="none" stroke="#6e6e6e" stroke-width="1"/>
<path d="M5 2.2c-1 0-1.4.5-1.4 1.5v1.8c0 .8-.5 1.2-1.3 1.2.8 0 1.3.4 1.3 1.2v1.8c0 1 .4 1.5 1.4 1.5M7 2.2c1 0 1.4.5 1.4 1.5v1.8c0 .8.5 1.2 1.3 1.2-.8 0-1.3.4-1.3 1.2v1.8c0 1-.4 1.5-1.4 1.5" fill="none" stroke="#4a80bd" stroke-width="1.1"/>
<path d="M5.80 15.60 L9.56 14.53 L16.14 7.94 L13.46 5.26 L6.87 11.84z" fill="#4a80bd" stroke="#fff" stroke-width="0.9"/>
</svg>
<span id="t80" class="t" style="left:908px;top:295.86px;font-size:11.2px;color:#000;font-weight:400;">SC002832 - Ranorex1 (Ranorex)</span>
<svg style="position:absolute;left:888px;top:313px" width="16" height="16" viewBox="0 0 16 16">
<path d="M5 13.5H0.5V0.5H11.5V5.5" fill="none" stroke="#6e6e6e" stroke-width="1"/>
<path d="M5 2.2c-1 0-1.4.5-1.4 1.5v1.8c0 .8-.5 1.2-1.3 1.2.8 0 1.3.4 1.3 1.2v1.8c0 1 .4 1.5 1.4 1.5M7 2.2c1 0 1.4.5 1.4 1.5v1.8c0 .8.5 1.2 1.3 1.2-.8 0-1.3.4-1.3 1.2v1.8c0 1-.4 1.5-1.4 1.5" fill="none" stroke="#4a80bd" stroke-width="1.1"/>
<path d="M5.80 15.60 L9.56 14.53 L16.14 7.94 L13.46 5.26 L6.87 11.84z" fill="#4a80bd" stroke="#fff" stroke-width="0.9"/>
</svg>
<span id="t81" class="t" style="left:908px;top:314.86px;font-size:11.2px;color:#000;font-weight:400;">SC002833 - ReferenceToWord (Ranorex)</span>
<div style="position:absolute;left:903px;top:311px;width:365px;height:20px;box-sizing:border-box;border:1px dotted #333"></div>
<svg style="position:absolute;left:855px;top:317px" width="6" height="9" viewBox="0 0 6 9"><path d="M1 1v7l4-3.5z" fill="#444"/></svg>
</body></html>
